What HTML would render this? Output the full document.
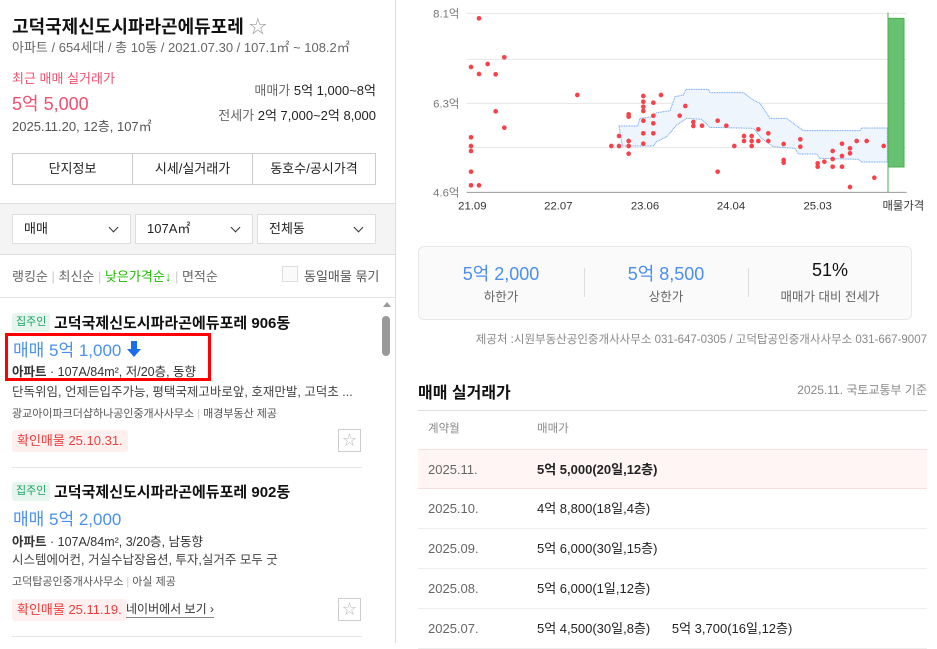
<!DOCTYPE html>
<html><head><meta charset="utf-8">
<style>
*{margin:0;padding:0;box-sizing:border-box}
body{width:937px;height:643px;overflow:hidden;background:#fff;font-family:"Liberation Sans","Noto Sans CJK KR",sans-serif;color:#222;position:relative}
.a{position:absolute;white-space:nowrap}
.g{color:#666}
.btn{position:absolute;top:153px;height:32px;border:1px solid #ccc;text-align:center;line-height:30px;font-size:13px;background:#fff}
.sel{position:absolute;top:214px;height:30px;border:1px solid #ddd;background:#fff;font-size:13px;line-height:28px;padding-left:11px}
.sel:after{content:"";position:absolute;right:13px;top:9px;width:6px;height:6px;border-right:1.5px solid #333;border-bottom:1.5px solid #333;transform:rotate(45deg)}
.tag{position:absolute;height:19px;background:#e6f6ee;color:#1aa260;font-size:11px;line-height:19px;padding:0 4px;border-radius:3px}
.conf{position:absolute;height:22px;background:#fff0f0;color:#f03c3c;font-size:13px;line-height:22px;padding:0 5px;border-radius:3px}
.star{position:absolute;width:23px;height:23px;border:1px solid #ccc;color:#bbb;text-align:center;line-height:20px;font-size:14px}
.row{position:absolute;left:418px;width:509px;height:40px;border-bottom:1px solid #eee;font-size:13px;line-height:40px}
.row .d{position:absolute;left:10px;color:#666}
.row .p{position:absolute;left:119px;color:#222}
</style></head><body>
<div class="a" style="left:0;top:0;width:396px;height:643px;border-right:1px solid #ddd"></div>
<div class="a" style="left:12px;top:13px;font-size:18px;font-weight:bold;color:#111">고덕국제신도시파라곤에듀포레 <span style="color:#999;font-weight:normal">☆</span></div>
<div class="a g" style="left:12px;top:37px;font-size:13px">아파트 / 654세대 / 총 10동 / 2021.07.30 / 107.1㎡ ~ 108.2㎡</div>
<div class="a" style="left:12px;top:68px;font-size:13px;color:#f0506e">최근 매매 실거래가</div>
<div class="a" style="left:12px;top:90px;font-size:18px;color:#f0506e">5억 5,000</div>
<div class="a g" style="left:12px;top:116px;font-size:13px;color:#555">2025.11.20, 12층, 107㎡</div>
<div class="a" style="right:561px;top:80px;font-size:13px"><span class="g">매매가</span> 5억 1,000~8억</div>
<div class="a" style="right:561px;top:105px;font-size:13px"><span class="g">전세가</span> 2억 7,000~2억 8,000</div>
<div class="btn" style="left:12px;width:121px">단지정보</div>
<div class="btn" style="left:132px;width:121px">시세/실거래가</div>
<div class="btn" style="left:252px;width:124px">동호수/공시가격</div>
<div class="a" style="left:0;top:203px;width:395px;height:52px;background:#f4f4f4;border-top:1px solid #ddd;border-bottom:1px solid #ddd"></div>
<div class="sel" style="left:12px;width:119px">매매</div>
<div class="sel" style="left:135px;width:118px">107A㎡</div>
<div class="sel" style="left:257px;width:119px">전체동</div>
<div class="a" style="left:12px;top:266px;font-size:13px;color:#666">랭킹순 <span style="color:#ccc">|</span> 최신순 <span style="color:#ccc">|</span> <span style="color:#1fb800">낮은가격순↓</span> <span style="color:#ccc">|</span> 면적순</div>
<div class="a" style="left:282px;top:266px;width:16px;height:16px;border:1px solid #ddd;background:#fafafa"></div>
<div class="a" style="left:304px;top:266px;font-size:13px;color:#555">동일매물 묶기</div>
<div class="a" style="left:0;top:297px;width:395px;border-top:1px solid #e5e5e5"></div>
<div class="a" style="left:383px;top:302px;width:0;height:0;border-left:4px solid transparent;border-right:4px solid transparent;border-bottom:5px solid #999"></div>
<div class="a" style="left:382px;top:316px;width:8px;height:40px;background:#999;border-radius:4px"></div>
<div class="tag" style="left:12px;top:313px">집주인</div>
<div class="a" style="left:54px;top:312px;font-size:15px;font-weight:bold;color:#111">고덕국제신도시파라곤에듀포레 906동</div>
<div class="a" style="left:13px;top:336px;font-size:17px;color:#4a8ff0">매매 5억 1,000</div>
<svg class="a" style="left:126px;top:340px" width="16" height="18" viewBox="0 0 16 18"><path d="M5 1h6v8h4l-7 8-7-8h4z" fill="#1a6ee8"/></svg>
<div class="a" style="left:5px;top:333px;width:206px;height:48px;border:3px solid #f00"></div>
<div class="a" style="left:12px;top:361px;font-size:12.5px;color:#333"><b>아파트</b> · 107A/84m², 저/20층, 동향</div>
<div class="a" style="left:12px;top:381px;font-size:12.5px;color:#444">단독위임, 언제든입주가능, 평택국제고바로앞, 호재만발, 고덕초 ...</div>
<div class="a" style="left:12px;top:405px;font-size:11px;color:#555">광교아이파크더샵하나공인중개사사무소 <span style="color:#ccc">|</span> 매경부동산 제공</div>
<div class="conf" style="left:12px;top:430px">확인매물 25.10.31.</div>
<div class="star" style="left:338px;top:429px">☆</div>
<div class="a" style="left:12px;top:467px;width:350px;border-top:1px solid #e5e5e5"></div>
<div class="tag" style="left:12px;top:482px">집주인</div>
<div class="a" style="left:54px;top:481px;font-size:15px;font-weight:bold;color:#111">고덕국제신도시파라곤에듀포레 902동</div>
<div class="a" style="left:13px;top:505px;font-size:17px;color:#4a8ff0">매매 5억 2,000</div>
<div class="a" style="left:12px;top:531px;font-size:12.5px;color:#333"><b>아파트</b> · 107A/84m², 3/20층, 남동향</div>
<div class="a" style="left:12px;top:549px;font-size:12.5px;color:#444">시스템에어컨, 거실수납장옵션, 투자,실거주 모두 굿</div>
<div class="a" style="left:12px;top:573px;font-size:11px;color:#555">고덕탑공인중개사사무소 <span style="color:#ccc">|</span> 아실 제공</div>
<div class="conf" style="left:12px;top:599px">확인매물 25.11.19.</div>
<div class="a" style="left:126px;top:600px;font-size:12px;color:#333;border-bottom:1px solid #888">네이버에서 보기 ›</div>
<div class="star" style="left:338px;top:598px">☆</div>
<div class="a" style="left:12px;top:636px;width:350px;border-top:1px solid #e5e5e5"></div>
<svg class="a" style="left:400px;top:0" width="537" height="220" viewBox="0 0 1611 660">
<g stroke="#e6e6e6" stroke-width="3"><line x1="200" y1="40" x2="1520" y2="40"/><line x1="200" y1="178" x2="1520" y2="178"/><line x1="200" y1="310" x2="1520" y2="310"/><line x1="200" y1="443" x2="1520" y2="443"/></g>
<line x1="200" y1="577" x2="1520" y2="577" stroke="#999" stroke-width="3"/>
<polygon fill="#eef5fc" stroke="#6ea6ee" stroke-width="3" stroke-dasharray="3 2" points="657,378 713,378 720,355 760,350 770,338 810,332 825,290 850,285 858,268 925,268 930,278 1030,278 1060,300 1080,310 1110,355 1160,355 1210,392 1380,392 1385,384 1462,384 1462,486 1385,486 1375,478 1260,475 1250,462 1195,462 1185,445 1120,440 1085,415 1060,385 930,382 905,358 860,355 830,375 800,410 770,425 760,438 667,438"/>
<rect x="1464" y="55" width="48" height="446" fill="#66c271" stroke="#4caf50" stroke-width="3"/>
<line x1="1464" y1="38" x2="1464" y2="577" stroke="#4caf50" stroke-width="3"/>
<g fill="#f5424b">
<circle cx="237" cy="55" r="7"/><circle cx="213" cy="201" r="7"/><circle cx="237" cy="222" r="7"/><circle cx="263" cy="192" r="7"/><circle cx="287" cy="223" r="7"/><circle cx="313" cy="172" r="7"/><circle cx="287" cy="334" r="7"/><circle cx="313" cy="383" r="7"/><circle cx="213" cy="412" r="7"/><circle cx="213" cy="438" r="7"/><circle cx="213" cy="453" r="7"/><circle cx="213" cy="515" r="7"/><circle cx="213" cy="556" r="7"/><circle cx="237" cy="556" r="7"/><circle cx="532" cy="285" r="7"/><circle cx="634" cy="438" r="7"/><circle cx="657" cy="408" r="7"/><circle cx="657" cy="438" r="7"/><circle cx="686" cy="343" r="7"/><circle cx="686" cy="350" r="7"/><circle cx="686" cy="423" r="7"/><circle cx="686" cy="438" r="7"/><circle cx="686" cy="461" r="7"/><circle cx="730" cy="288" r="7"/><circle cx="730" cy="305" r="7"/><circle cx="730" cy="320" r="7"/><circle cx="730" cy="333" r="7"/><circle cx="730" cy="362" r="7"/><circle cx="730" cy="400" r="7"/><circle cx="730" cy="431" r="7"/><circle cx="760" cy="308" r="7"/><circle cx="760" cy="347" r="7"/><circle cx="760" cy="370" r="7"/><circle cx="760" cy="400" r="7"/><circle cx="783" cy="285" r="7"/><circle cx="839" cy="347" r="7"/><circle cx="856" cy="318" r="7"/><circle cx="880" cy="366" r="7"/><circle cx="880" cy="378" r="7"/><circle cx="906" cy="377" r="7"/><circle cx="953" cy="362" r="7"/><circle cx="953" cy="515" r="7"/><circle cx="979" cy="377" r="7"/><circle cx="1003" cy="438" r="7"/><circle cx="1032" cy="408" r="7"/><circle cx="1032" cy="423" r="7"/><circle cx="1055" cy="408" r="7"/><circle cx="1055" cy="423" r="7"/><circle cx="1055" cy="438" r="7"/><circle cx="1075" cy="388" r="7"/><circle cx="1075" cy="423" r="7"/><circle cx="1105" cy="400" r="7"/><circle cx="1105" cy="423" r="7"/><circle cx="1151" cy="432" r="7"/><circle cx="1151" cy="480" r="7"/><circle cx="1151" cy="488" r="7"/><circle cx="1201" cy="418" r="7"/><circle cx="1201" cy="440" r="7"/><circle cx="1253" cy="490" r="7"/><circle cx="1253" cy="500" r="7"/><circle cx="1273" cy="485" r="7"/><circle cx="1298" cy="453" r="7"/><circle cx="1298" cy="477" r="7"/><circle cx="1298" cy="500" r="7"/><circle cx="1326" cy="431" r="7"/><circle cx="1326" cy="468" r="7"/><circle cx="1326" cy="500" r="7"/><circle cx="1350" cy="445" r="7"/><circle cx="1350" cy="460" r="7"/><circle cx="1350" cy="561" r="7"/><circle cx="1370" cy="423" r="7"/><circle cx="1400" cy="423" r="7"/><circle cx="1423" cy="533" r="7"/><circle cx="1451" cy="438" r="7"/>
</g>
<g font-family="Liberation Sans,Noto Sans CJK KR,sans-serif" font-size="34" fill="#777" text-anchor="end"><text x="178" y="52">8.1억</text><text x="178" y="322">6.3억</text><text x="178" y="589">4.6억</text></g>
<g font-family="Liberation Sans,Noto Sans CJK KR,sans-serif" font-size="34" fill="#333" text-anchor="middle"><text x="217" y="628">21.09</text><text x="475" y="628">22.07</text><text x="735" y="628">23.06</text><text x="993" y="628">24.04</text><text x="1253" y="628">25.03</text><text x="1510" y="628">매물가격</text></g>
</svg>
<div class="a" style="left:418px;top:246px;width:494px;height:74px;border:1px solid #e8e8e8;border-radius:6px;background:#fafafa"></div>
<div class="a" style="left:584px;top:268px;height:29px;border-left:1px solid #ddd"></div>
<div class="a" style="left:748px;top:268px;height:29px;border-left:1px solid #ddd"></div>
<div class="a" style="left:418px;width:166px;top:260px;text-align:center;font-size:18px;color:#4a8ff0">5억 2,000</div>
<div class="a" style="left:418px;width:166px;top:286px;text-align:center;font-size:12.5px;color:#666">하한가</div>
<div class="a" style="left:584px;width:164px;top:260px;text-align:center;font-size:18px;color:#4a8ff0">5억 8,500</div>
<div class="a" style="left:584px;width:164px;top:286px;text-align:center;font-size:12.5px;color:#666">상한가</div>
<div class="a" style="left:748px;width:164px;top:260px;text-align:center;font-size:18px;color:#111">51%</div>
<div class="a" style="left:748px;width:164px;top:286px;text-align:center;font-size:12.5px;color:#666">매매가 대비 전세가</div>
<div class="a" style="right:10px;top:331px;font-size:11.5px;color:#888">제공처 :시원부동산공인중개사사무소 031-647-0305 / 고덕탑공인중개사사무소 031-667-9007</div>
<div class="a" style="left:418px;top:379px;font-size:16px;font-weight:bold;color:#111">매매 실거래가</div>
<div class="a" style="right:10px;top:381px;font-size:12px;color:#888">2025.11. 국토교통부 기준</div>
<div class="a" style="left:418px;top:410px;width:509px;border-top:1px solid #ddd"></div>
<div class="a" style="left:428px;top:420px;font-size:11.5px;color:#888">계약월</div>
<div class="a" style="left:537px;top:420px;font-size:11.5px;color:#888">매매가</div>
<div class="row" style="top:449px;background:#fff5f5;border-top:1px solid #f8dede;border-bottom:1px solid #f8dede"><span class="d">2025.11.</span><span class="p" style="font-weight:bold">5억 5,000(20일,12층)</span></div>
<div class="row" style="top:489px"><span class="d">2025.10.</span><span class="p">4억 8,800(18일,4층)</span></div>
<div class="row" style="top:529px"><span class="d">2025.09.</span><span class="p">5억 6,000(30일,15층)</span></div>
<div class="row" style="top:569px"><span class="d">2025.08.</span><span class="p">5억 6,000(1일,12층)</span></div>
<div class="row" style="top:609px"><span class="d">2025.07.</span><span class="p">5억 4,500(30일,8층) &nbsp;&nbsp;&nbsp;&nbsp; 5억 3,700(16일,12층)</span></div>
</body></html>
